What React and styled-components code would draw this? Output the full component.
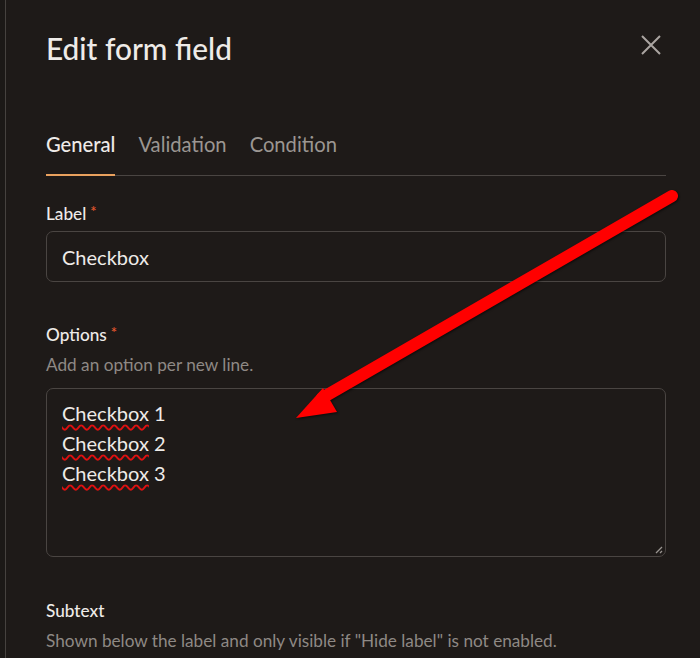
import React from "react";
import styled, { createGlobalStyle } from "styled-components";

const GlobalStyle = createGlobalStyle`
  html, body { margin: 0; padding: 0; background: #1e1a18; }
  body { font-family: Lato, "Open Sans", sans-serif; color: #ebe8e5; }
`;

const Page = styled.div`
  position: relative;
  min-height: 100vh;
  display: flex;
  padding-left: 5px;
  background: #1c1917;
  overflow: hidden;
`;

const Panel = styled.div`
  flex: 1;
  background: #1e1a18;
  border-left: 1px solid #46423f;
  padding: 31px 34px 0 40px;
  display: flex;
  flex-direction: column;
`;

const Header = styled.header`
  display: flex;
  justify-content: space-between;
  align-items: flex-start;
`;

const Title = styled.h1`
  margin: 0;
  font-size: 29.8px;
  line-height: 1.2;
  font-weight: 500;
  color: #eeebe8;
`;

const CloseButton = styled.button`
  all: unset;
  width: 20px;
  height: 20px;
  margin: 4px 5px 0 0;
  display: flex;
  align-items: center;
  justify-content: center;
  color: #aaa5a1;
`;

const Tabs = styled.nav`
  margin-top: 65px;
  display: flex;
  gap: 23px;
  border-bottom: 1px solid #4a4542;
`;

const Tab = styled.div`
  font-size: 20.2px;
  line-height: 1.2;
  font-weight: ${(p) => (p.$active ? 500 : 400)};
  color: ${(p) => (p.$active ? "#eeebe8" : "#9b9692")};
  padding-bottom: 18px;
  margin-bottom: -1px;
  border-bottom: 2px solid ${(p) => (p.$active ? "#e9a15e" : "transparent")};
`;

const Field = styled.section`
  display: flex;
  flex-direction: column;
  margin-top: ${(p) => p.$top}px;
`;

const FieldLabel = styled.label`
  font-size: 17.2px;
  line-height: 1.2;
  font-weight: 500;
  color: #eeebe8;
`;

const Required = styled.span`
  color: #e4572e;
  margin-left: 4px;
  font-size: 15px;
  vertical-align: 3px;
`;

const Help = styled.p`
  margin: 9px 0 0;
  font-size: 17.2px;
  line-height: 1.2;
  color: #8e8985;
`;

const TextInput = styled.div`
  margin-top: 6.5px;
  height: 51px;
  box-sizing: border-box;
  border: 1px solid #4a4542;
  border-radius: 7px;
  padding: 1px 15px 0;
  display: flex;
  align-items: center;
  font-size: 20px;
  color: #eeebe8;
`;

const TextArea = styled.div`
  position: relative;
  margin-top: 13px;
  height: 169px;
  box-sizing: border-box;
  border: 1px solid #4a4542;
  border-radius: 7px;
  padding: 9px 15px;
  font-size: 20px;
  line-height: 30px;
  color: #eeebe8;
`;

const Line = styled.div``;

const Misspelled = styled.span`
  text-decoration: underline wavy #e01010;
  text-decoration-thickness: 1.5px;
  text-underline-offset: 3px;
`;

const Grip = styled.svg`
  position: absolute;
  right: 2px;
  bottom: 2px;
`;

const Arrow = styled.svg`
  position: absolute;
  left: 0;
  top: 0;
  pointer-events: none;
  filter: drop-shadow(1px 1px 1px rgba(0, 0, 0, 0.6));
`;

export default function App() {
  return (
    <>
      <GlobalStyle />
      <Page>
        <Panel>
          <Header>
            <Title>Edit form field</Title>
            <CloseButton aria-label="Close">
              <svg width="20" height="20" viewBox="0 0 20 20">
                <path d="M1 1 L19 19 M19 1 L1 19" stroke="currentColor" strokeWidth="2" />
              </svg>
            </CloseButton>
          </Header>
          <Tabs>
            <Tab $active>General</Tab>
            <Tab>Validation</Tab>
            <Tab>Condition</Tab>
          </Tabs>
          <Field $top={26}>
            <FieldLabel>
              Label<Required>*</Required>
            </FieldLabel>
            <TextInput>Checkbox</TextInput>
          </Field>
          <Field $top={41}>
            <FieldLabel>
              Options<Required>*</Required>
            </FieldLabel>
            <Help>Add an option per new line.</Help>
            <TextArea>
              <Line><Misspelled>Checkbox</Misspelled> 1</Line>
              <Line><Misspelled>Checkbox</Misspelled> 2</Line>
              <Line><Misspelled>Checkbox</Misspelled> 3</Line>
              <Grip width="8" height="8" viewBox="0 0 8 8">
                <path d="M7 1 L1 7 M7 5 L5 7" stroke="#9a9591" strokeWidth="1.3" />
              </Grip>
            </TextArea>
          </Field>
          <Field $top={44}>
            <FieldLabel>Subtext</FieldLabel>
            <Help>Shown below the label and only visible if "Hide label" is not enabled.</Help>
          </Field>
        </Panel>
        <Arrow width="700" height="658" viewBox="0 0 700 658">
          <line x1="672" y1="196" x2="322" y2="398" stroke="#ff0000" strokeWidth="12" strokeLinecap="round" />
          <polygon points="296,418 323,388 337,412" fill="#ff0000" />
        </Arrow>
      </Page>
    </>
  );
}
